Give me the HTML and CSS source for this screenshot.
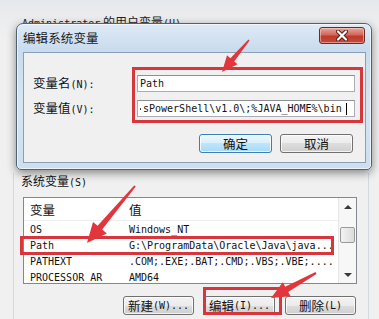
FILE: index.html
```html
<!DOCTYPE html>
<html>
<head>
<meta charset="utf-8">
<link rel="stylesheet" href="styles.css">
</head>
<body>
<div class="parent">
  <div class="parent-top"><span class="m">Administrator</span> 的用户变量<span class="m">(U)</span></div>
  <div class="group">
    <div class="group-label">系统变量<span class="m">(S)</span></div>
    <div class="list">
      <div class="list-main">
        <div class="row head"><span class="c1">变量</span><span class="c2">值</span></div>
        <div class="row mono"><span class="c1">OS</span><span class="c2">Windows_NT</span></div>
        <div class="row mono"><span class="c1">Path</span><span class="c2">G:\ProgramData\Oracle\Java\java...</span></div>
        <div class="row mono"><span class="c1">PATHEXT</span><span class="c2">.COM;.EXE;.BAT;.CMD;.VBS;.VBE;....</span></div>
        <div class="row mono last"><span class="c1">PROCESSOR_AR</span><span class="c2">AMD64</span></div>
      </div>
      <div class="scroll">
        <div class="sb-btn"><span class="tri-up"></span></div>
        <div class="sb-track"><div class="sb-thumb"></div></div>
        <div class="sb-btn"><span class="tri-down"></span></div>
      </div>
    </div>
    <div class="btns">
      <div class="btn">新建<span class="m">(W)...</span></div>
      <div class="btn">编辑<span class="m">(I)...</span></div>
      <div class="btn">删除<span class="m">(L)</span></div>
    </div>
  </div>
</div>

<div class="dialog">
  <div class="dlg-title">编辑系统变量</div>
  <div class="close">
    <svg width="16" height="11" viewBox="0 0 16 11"><path d="M4 1.5 L12 9.5 M12 1.5 L4 9.5" stroke="#5a1a14" stroke-width="4" stroke-linecap="round"/><path d="M4 1.5 L12 9.5 M12 1.5 L4 9.5" stroke="#fff" stroke-width="2.2" stroke-linecap="round"/></svg>
  </div>
  <div class="client">
    <div class="form">
      <div class="lbl">变量名<span class="m">(N):</span></div>
      <div class="field mono">Path</div>
      <div class="lbl">变量值<span class="m">(V):</span></div>
      <div class="field mono val"><span class="dot"></span>sPowerShell\v1.0\;%JAVA_HOME%\bin<span class="caret"></span></div>
    </div>
    <div class="dlg-btns">
      <div class="btn wide default">确定</div>
      <div class="btn wide">取消</div>
    </div>
  </div>
</div>

<svg class="annot" width="379" height="319" viewBox="0 0 379 319">
  <g fill="none" stroke="#d6363c" stroke-width="3">
    <rect x="133.5" y="68.5" width="228" height="53"/>
    <rect x="21.5" y="237.5" width="311" height="16"/>
    <rect x="204.5" y="288.5" width="76" height="25"/>
  </g>
  <g fill="#e0363c">
    <polygon points="248.4,39.5 230.4,58.2 227,55.3 222,72 237.6,64.3 234.2,61.4 249.6,40.5"/>
    <polygon points="134.2,185.4 97.6,225.8 93,221.9 87,243 106.8,233.5 102.2,229.6 135.8,186.6"/>
    <polygon points="315.5,272.1 285.2,286.7 282.8,282.3 271,298 290.6,296.3 288.2,291.9 316.5,273.9"/>
  </g>
</svg>
</body>
</html>
```

FILE: styles.css
```css
* { box-sizing: border-box; }
html, body { margin: 0; padding: 0; }
body {
  width: 379px;
  height: 319px;
  overflow: hidden;
  position: relative;
  background: #f0f0f0;
  font-family: "Noto Sans CJK SC", sans-serif;
  font-size: 12px;
  color: #000;
}
.m,
.mono {
  font-family: "DejaVu Sans Mono", monospace;
  font-size: 10px;
}

.parent {
  height: 319px;
  padding-left: 13px;
  background: linear-gradient(#e6e9ec, #f0f0f0 40px);
}
.parent-top {
  padding: 14px 0 0 9px;
  height: 30px;
  line-height: 16px;
  color: #222;
  white-space: nowrap;
}
.group {
  margin-top: 143px;
  width: 356px;
  height: 146px;
  border-left: 1px solid #d3d9df;
  border-right: 1px solid #d3d9df;
  padding: 0 11px 0 9px;
}
.group-label {
  line-height: 16px;
  margin-left: -2px;
  color: #111;
}
.list {
  margin-top: 6px;
  height: 87px;
  border: 1px solid #828790;
  background: #fff;
  display: flex;
}
.list-main {
  flex: 1;
  overflow: hidden;
}
.row {
  display: flex;
  align-items: center;
  height: 16px;
  white-space: nowrap;
  color: #111;
}
.row.head {
  height: 23px;
  font-size: 12.5px;
  border-bottom: 1px solid #eceef1;
}
.row.last {
  align-items: flex-start;
  padding-top: 3px;
}
.c1 {
  width: 99px;
  flex: none;
  padding-left: 6px;
  overflow: hidden;
}
.c2 {
  padding-left: 6px;
}
.scroll {
  width: 18px;
  border-left: 1px solid #e6e6e6;
  background: #f7f7f7;
  display: flex;
  flex-direction: column;
}
.sb-btn {
  height: 17px;
  display: flex;
  align-items: center;
  justify-content: center;
}
.tri-up {
  width: 0; height: 0;
  border-left: 4px solid transparent;
  border-right: 4px solid transparent;
  border-bottom: 4px solid #3a3a3a;
}
.tri-down {
  width: 0; height: 0;
  border-left: 4px solid transparent;
  border-right: 4px solid transparent;
  border-top: 4px solid #3a3a3a;
}
.sb-track {
  flex: 1;
  padding: 12px 0 0 1px;
}
.sb-thumb {
  width: 15px;
  height: 16px;
  border: 1px solid #9a9a9a;
  border-radius: 2px;
  background: linear-gradient(90deg, #f3f3f3, #dcdcdc);
}
.btns {
  margin-top: 12px;
  display: flex;
  justify-content: flex-end;
  gap: 10px;
  padding-right: 1px;
}
.btn {
  width: 71px;
  height: 19px;
  border: 1px solid #707070;
  border-radius: 3px;
  background: linear-gradient(#f3f3f3 0%, #ebebeb 50%, #dddddd 50%, #cfcfcf 100%);
  box-shadow: inset 0 0 0 1px rgba(255,255,255,0.75);
  display: flex;
  align-items: center;
  justify-content: center;
  line-height: 17px;
  white-space: nowrap;
  color: #111;
  font-size: 12.5px;
}
.btn.wide { width: 73px; }
.btn.default {
  border-color: #3c7fb1;
  background: linear-gradient(#eaf6fd 0%, #d9f0fc 50%, #bee6fd 50%, #a7d9f5 100%);
}

.dialog {
  position: absolute;
  left: 16px;
  top: 23px;
  width: 356px;
  height: 147px;
  border: 1px solid #4f6274;
  border-radius: 7px 7px 5px 5px;
  background: linear-gradient(180deg, #dfeaf5 0%, #c9dbee 18%, #d7e5f3 55%, #cddeef 100%);
  box-shadow: 0 3px 10px rgba(0,0,0,0.45), inset 0 0 0 1px rgba(255,255,255,0.6);
  padding: 0 5px 6px 6px;
  display: flex;
  flex-direction: column;
}
.dlg-title {
  height: 28px;
  line-height: 28px;
  font-size: 12.5px;
  letter-spacing: 0.1px;
  color: #1a1a1a;
}
.close {
  position: absolute;
  right: 6px;
  top: 3px;
  width: 46px;
  height: 17px;
  border: 1px solid #6e2a22;
  border-radius: 3px;
  background: linear-gradient(#e7a89c 0%, #d2675a 45%, #c0392c 55%, #c44b3c 100%);
  box-shadow: inset 0 0 0 1px rgba(255,220,210,0.5);
  display: flex;
  align-items: center;
  justify-content: center;
}
.client {
  flex: 1;
  border: 1px solid #8a9fb6;
  background: #f0f0f0;
  padding: 21px 10px 0 9px;
}
.form {
  display: grid;
  grid-template-columns: 104px 1fr;
  row-gap: 6px;
  align-items: center;
}
.lbl {
  line-height: 17px;
  color: #111;
  font-size: 12.5px;
}
.field {
  height: 17px;
  border: 1px solid #abadb3;
  border-top-color: #8e9095;
  background: #fff;
  padding-left: 2px;
  line-height: 15px;
  white-space: nowrap;
  overflow: hidden;
  display: flex;
  align-items: center;
  color: #111;
}
.val {
  padding-left: 2px;
}
.dot {
  width: 1px;
  height: 2px;
  margin-right: 2px;
  background: #444;
  flex: none;
}
.caret {
  width: 1px;
  height: 12px;
  background: #000;
  margin-left: 4px;
  flex: none;
}
.dlg-btns {
  margin-top: 16px;
  display: flex;
  justify-content: flex-end;
  gap: 8px;
  padding-right: 2px;
}

.annot {
  position: absolute;
  left: 0;
  top: 0;
  pointer-events: none;
}
```
